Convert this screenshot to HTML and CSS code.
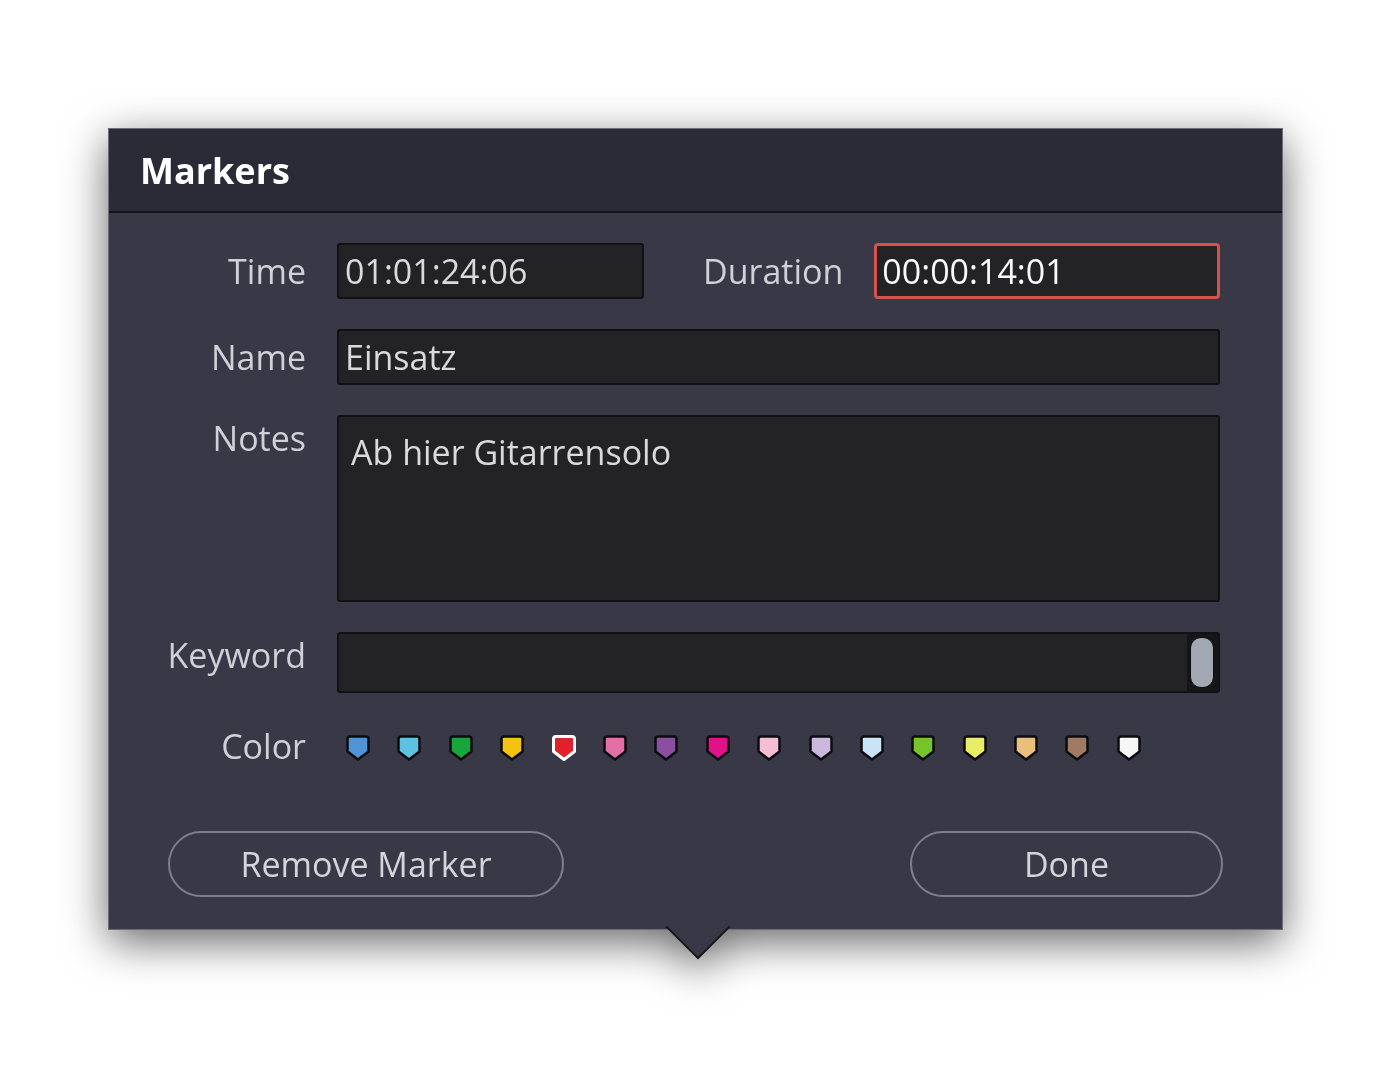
FILE: index.html
```html
<!DOCTYPE html>
<html lang="en">
<head>
    <meta charset="UTF-8">
    <title>Markers</title>
    <link rel="stylesheet" href="styles.css">
</head>
<body>

<div class="dialog">
    <div class="dialog-header">
        <h1>Markers</h1>
    </div>

    <div class="dialog-body">
        <div class="form">
            <label class="label">Time</label>
            <div class="time-row">
                <div class="field time-field">01:01:24:06</div>
                <label class="label duration-label">Duration</label>
                <div class="field duration-field active">00:00:14:01</div>
            </div>

            <label class="label">Name</label>
            <div class="field">Einsatz</div>

            <label class="label label-top">Notes</label>
            <div class="field notes">Ab hier Gitarrensolo</div>

            <label class="label label-top">Keyword</label>
            <div class="field keyword">
                <div class="scroll-track"><div class="scroll-thumb"></div></div>
            </div>

            <label class="label">Color</label>
            <div class="colors" id="colors"></div>
        </div>

        <div class="actions">
            <button class="btn btn-remove">Remove Marker</button>
            <button class="btn btn-done">Done</button>
        </div>
    </div>
</div>

<script>
    // marker colours, in palette order
    const colors = [
        '#4f93d8', '#5dc2e2', '#17a63c', '#f4c30f', '#e2202b', '#e26fa6',
        '#8b4f9f', '#e1118a', '#f4bdd3', '#cbb9db', '#c9e3f7', '#76c32a',
        '#e9ed66', '#e9bf7b', '#9f7b63', '#f6f6f6'
    ];
    const selected = 4;
    const row = document.getElementById('colors');

    colors.forEach((c, i) => {
        const on = i === selected;
        row.insertAdjacentHTML('beforeend',
            '<svg class="marker" width="26" height="28" viewBox="0 0 26 28">' +
            '<path d="M5 2.5H21Q23.5 2.5 23.5 5V17.5L13 25.5L2.5 17.5V5Q2.5 2.5 5 2.5Z" ' +
            'fill="' + c + '" stroke="' + (on ? '#ffffff' : '#0c0c10') + '" ' +
            'stroke-width="' + (on ? 3 : 2.5) + '" stroke-linejoin="round"/></svg>');
    });
</script>

</body>
</html>
```

FILE: styles.css
```css
html, body {
    min-height: 100vh;
}
body {
    box-sizing: border-box;
    font-family: "Open Sans", "Noto Sans", sans-serif;
    background-color: #fff;
    margin: 0;
    padding: 129px 0 0 109px;
}
.dialog {
    position: relative;
    width: 1173px;
    background-color: #393847;
    box-shadow: 0 0 0 1px #6d6c78;
    filter: drop-shadow(0 12px 22px rgba(0, 0, 0, 0.6));
}
/* little pointer under the dialog */
.dialog::after {
    content: "";
    position: absolute;
    left: 566px;
    bottom: -21px;
    width: 44px;
    height: 44px;
    background-color: #393847;
    border-right: 2px solid #15151b;
    border-bottom: 2px solid #15151b;
    transform: rotate(45deg);
}
.dialog-header {
    height: 82px;
    display: flex;
    align-items: center;
    padding-left: 31px;
    background-color: #2b2a37;
    border-bottom: 2px solid #121217;
}
h1 {
    margin: 0;
    font-size: 36px;
    font-weight: 700;
    color: #fff;
}
.dialog-body {
    padding: 30px 0 32px;
}
.form {
    display: grid;
    grid-template-columns: 166px 1fr;
    column-gap: 31px;
    row-gap: 30px;
    padding: 0 62px 0 31px;
}
.label {
    font-size: 34px;
    line-height: 46px;
    color: #d0d0d6;
    text-align: right;
    align-self: center;
}
.label-top {
    align-self: start;
}
.time-row {
    display: flex;
    align-items: center;
}
.field {
    box-sizing: border-box;
    height: 56px;
    padding: 0 6px;
    font-size: 34px;
    line-height: 52px;
    color: #dadadc;
    background-color: #232326;
    border: 2px solid #111114;
    border-radius: 3px;
}
.time-field {
    width: 307px;
}
.duration-label {
    margin-left: 59px;
}
.duration-field {
    flex: 1;
    margin-left: 31px;
}
.active {
    color: #fafafa;
    border: 3px solid #d5534f;
    border-radius: 4px;
    line-height: 50px;
    padding-left: 5px;
}
.notes {
    height: 187px;
    padding: 12px 12px;
    line-height: 46px;
}
.keyword {
    height: 61px;
    padding: 0;
    display: flex;
    justify-content: flex-end;
}
.scroll-track {
    width: 31px;
    padding: 3px 4px 3px 3px;
    box-sizing: border-box;
    background-color: #16161a;
}
.scroll-thumb {
    height: 100%;
    border-radius: 11px;
    background-color: #a3a9b3;
    border: 1px solid #0c0c0f;
    box-sizing: border-box;
}
.colors {
    display: flex;
    align-items: center;
    gap: 25.4px;
    padding-left: 8px;
}
.marker {
    display: block;
    flex: none;
    margin-top: 4px;
}
.actions {
    display: flex;
    justify-content: space-between;
    padding: 0 59px 0 59px;
    margin-top: 62px;
}
.btn {
    height: 66px;
    font-family: inherit;
    font-size: 34px;
    color: #d4d4da;
    background-color: transparent;
    border: 2px solid #7f7e8a;
    border-radius: 33px;
    cursor: pointer;
}
.btn-remove {
    width: 396px;
}
.btn-done {
    width: 313px;
}
```
